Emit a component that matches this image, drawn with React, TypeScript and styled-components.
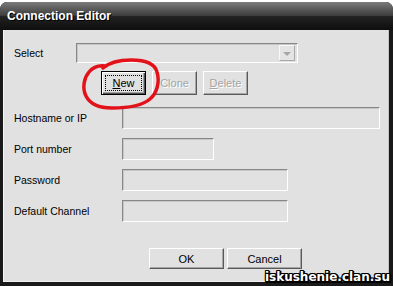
import React from "react";
import styled, { createGlobalStyle, css } from "styled-components";

const Global = createGlobalStyle`
  html, body { margin: 0; padding: 0; background: #ffffff; }
  body { font-family: "Liberation Sans", Arial, sans-serif; }
`;

const Window = styled.div`
  position: relative;
  width: 393px;
  height: 284px;
  margin-top: 2px;
  background: #1a1a1a;
  border-radius: 7px 7px 0 0;
  display: flex;
  flex-direction: column;
  box-sizing: border-box;
  overflow: hidden;
`;

const TitleBar = styled.div`
  height: 28px;
  flex: none;
  display: flex;
  align-items: center;
  padding-left: 7px;
  background: linear-gradient(
    to bottom,
    #7c7c7c 0%,
    #5a5a5a 25%,
    #3e3e3e 48%,
    #222222 52%,
    #161616 80%,
    #0e0e0e 100%
  );
  border-radius: 7px 7px 0 0;
`;

const Title = styled.span`
  color: #ffffff;
  font: bold 12px "Liberation Sans", Arial, sans-serif;
  text-shadow: 1px 1px 0 #000000;
`;

const Body = styled.div`
  flex: 1;
  margin: 0 4px 4px 3px;
  background: #e1e1e1;
  border-left: 1px solid #f6f6f6;
  border-right: 1px solid #c4c4c4;
  border-bottom: 1px solid #f0f0f0;
  display: flex;
  flex-direction: column;
  padding: 13px 0 0 10px;
  font: 10.5px "Liberation Sans", Arial, sans-serif;
  color: #000;
`;

const Row = styled.div<{ $mt?: number; $h?: number }>`
  display: flex;
  align-items: center;
  height: ${(p) => p.$h ?? 22}px;
  margin-top: ${(p) => p.$mt ?? 0}px;
`;

const Label = styled.div<{ $w: number }>`
  width: ${(p) => p.$w}px;
  flex: none;
  white-space: nowrap;
`;

const sunken = css`
  box-sizing: border-box;
  background: #e1e1e1;
  border: 1px solid;
  border-color: #878787 #ffffff #ffffff #878787;
  box-shadow: inset 1px 1px 0 #c6c6c6;
`;

const Field = styled.div<{ $w: number }>`
  ${sunken};
  width: ${(p) => p.$w}px;
  height: 22px;
`;

const Combo = styled.div`
  ${sunken};
  width: 222px;
  height: 20px;
  display: flex;
  justify-content: flex-end;
  align-items: center;
  padding-right: 2px;
`;

const ArrowBtn = styled.div`
  box-sizing: border-box;
  width: 16px;
  height: 16px;
  background: #e4e4e4;
  border: 1px solid;
  border-color: #f8f8f8 #a8a8a8 #a8a8a8 #f8f8f8;
  display: flex;
  align-items: center;
  justify-content: center;
`;

const Arrow = styled.div`
  width: 0;
  height: 0;
  border-left: 4px solid transparent;
  border-right: 4px solid transparent;
  border-top: 4px solid #a6a6a6;
  margin-top: 1px;
`;

const ButtonRow = styled.div<{ $mt: number; $pl: number; $gap: number }>`
  display: flex;
  margin-top: ${(p) => p.$mt}px;
  padding-left: ${(p) => p.$pl}px;
  gap: ${(p) => p.$gap}px;
`;

const Button = styled.div<{ $w: number; $h: number; $disabled?: boolean; $default?: boolean }>`
  box-sizing: border-box;
  width: ${(p) => p.$w}px;
  height: ${(p) => p.$h}px;
  background: #e1e1e1;
  display: flex;
  align-items: center;
  justify-content: center;
  font: 11px "Liberation Sans", Arial, sans-serif;
  color: ${(p) => (p.$disabled ? "#a4a4a4" : "#000")};
  text-shadow: ${(p) => (p.$disabled ? "1px 1px 0 #ffffff" : "none")};
  ${(p) =>
    p.$default
      ? css`
          border: 1px solid #000;
          padding: 3px;
          box-shadow: inset 1px 1px 0 #ffffff, inset -1px -1px 0 #505050,
            inset -2px -2px 0 #a0a0a0;
        `
      : css`
          border: 1px solid;
          border-color: #ffffff #5a5a5a #5a5a5a #ffffff;
          box-shadow: inset -1px -1px 0 #a6a6a6;
        `}
`;

const Focus = styled.span`
  flex: 1;
  align-self: stretch;
  display: flex;
  align-items: center;
  justify-content: center;
  border: 1px dotted #000;
`;

const U = styled.span`
  text-decoration: underline;
`;

const Watermark = styled.div`
  position: absolute;
  right: 3px;
  bottom: 1px;
  color: #ffffff;
  font: bold 12px "DejaVu Sans", Verdana, sans-serif;
  line-height: 15px;
  text-shadow: 1px 0 0 #000, -1px 0 0 #000, 0 1px 0 #000, 0 -1px 0 #000,
    1px 1px 0 #000, -1px -1px 0 #000, 1px -1px 0 #000, -1px 1px 0 #000,
    2px 0 0 #000, 0 2px 0 #000, 2px 2px 0 #000;
`;

const Annotation = styled.svg`
  position: absolute;
  left: 0;
  top: -2px;
  pointer-events: none;
`;

const fields = [
  { label: "Hostname or IP", w: 258 },
  { label: "Port number", w: 92 },
  { label: "Password", w: 166 },
  { label: "Default Channel", w: 166 },
];

export default function App() {
  return (
    <>
      <Global />
      <Window>
        <TitleBar>
          <Title>Connection Editor</Title>
        </TitleBar>
        <Body>
          <Row $h={20}>
            <Label $w={62}>Select</Label>
            <Combo>
              <ArrowBtn>
                <Arrow />
              </ArrowBtn>
            </Combo>
          </Row>
          <ButtonRow $mt={8} $pl={87} $gap={6}>
            <Button $w={45} $h={24} $default>
              <Focus>
                <span>
                  <U>N</U>ew
                </span>
              </Focus>
            </Button>
            <Button $w={45} $h={24} $disabled>
              Clone
            </Button>
            <Button $w={45} $h={24} $disabled>
              <span>
                <U>D</U>elete
              </span>
            </Button>
          </ButtonRow>
          {fields.map((f, i) => (
            <Row key={f.label} $mt={i === 0 ? 12 : 9}>
              <Label $w={108}>{f.label}</Label>
              <Field $w={f.w} />
            </Row>
          ))}
          <ButtonRow $mt={26} $pl={135} $gap={3}>
            <Button $w={75} $h={21}>OK</Button>
            <Button $w={75} $h={21}>Cancel</Button>
          </ButtonRow>
        </Body>
        <Annotation width="393" height="286" viewBox="0 0 393 286">
          <path
            d="M103,68 C110,62 120,60 131,60 C145,60 155,64 157,72 C160,82 157,93 150,99 C142,106 126,108 112,108 C100,108 90,104 86,96 C82,88 84,78 89,72 C93,67 99,65 106,66"
            fill="none"
            stroke="#e3121a"
            strokeWidth="3.5"
            strokeLinecap="round"
          />
        </Annotation>
        <Watermark>iskushenie.clan.su</Watermark>
      </Window>
    </>
  );
}
